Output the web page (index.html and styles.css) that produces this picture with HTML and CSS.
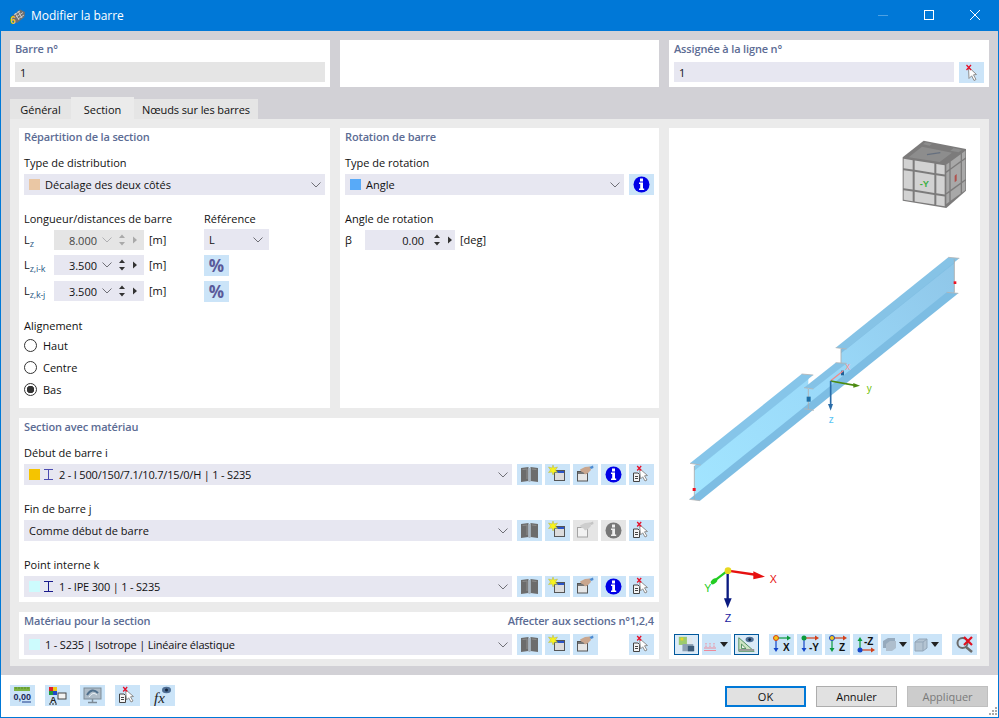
FILE: index.html
```html
<!DOCTYPE html>
<html>
<head>
	<title>Modifier la barre</title>
	<link rel="stylesheet" href="styles.css">
</head>
<body>

<svg class="defs">
	<symbol id="chev" viewBox="0 0 10 6"><path d="M.5 .5 5 5 9.500 .5" fill="none" stroke="#6f6f76"/></symbol>
	<symbol id="spin" viewBox="0 0 22 20"><path d="M4 4.500 7 8H1ZM1 12H7L4 15.500ZM15 6.500 19 10 15 13.500Z"/></symbol>
	<symbol id="info" viewBox="0 0 25 21">
		<circle cx="12.500" cy="10.500" r="8" fill="#0000e6"/>
		<rect x="11" y="4.500" width="3" height="3" fill="#fff"/>
		<path d="M10 8.500H14V14.500H15.200V16H10V14.500H11.200V10H10Z" fill="#fff"/>
	</symbol>
	<symbol id="info-off" viewBox="0 0 25 21">
		<circle cx="12.500" cy="10.500" r="8" fill="#777"/>
		<rect x="11" y="4.500" width="3" height="3" fill="#eee"/>
		<path d="M10 8.500H14V14.500H15.200V16H10V14.500H11.200V10H10Z" fill="#eee"/>
	</symbol>
	<symbol id="book" viewBox="0 0 25 21">
		<path d="M4 4 11.500 3V17L4 18ZM13.500 3 21 4V18L13.500 17Z" fill="#6c6c6c"/>
		<path d="M5.500 5.500 10 5V15M15 5 19.500 5.500" stroke="#8c8c8c" fill="none"/>
		<path d="M11.500 4H13.500V18H11.500Z" fill="#a9b4bf"/>
	</symbol>
	<symbol id="new" viewBox="0 0 25 21">
		<rect x="9.500" y="6.500" width="10" height="10" fill="#dcdcdc" stroke="#555"/>
		<rect x="10" y="7" width="9" height="2" fill="#2a55c8"/>
		<path d="M8 1 9 4 12.500 3 10.500 6 12.500 8.500 9.500 8 8 11 7 8 3.500 8.500 5.500 6 3.500 3 7 4Z" fill="#f6f21e" stroke="#b8b440" stroke-width=".5"/>
	</symbol>
	<symbol id="hand" viewBox="0 0 25 21">
		<rect x="4.500" y="7.500" width="10" height="9.500" fill="#e6e6e6" stroke="#555"/>
		<rect x="5" y="8" width="9" height="2" fill="#777"/>
		<path d="M7 5.500 12 3 17 2.500 18 6 15 9 12 10.500 10.500 8.500 8 7.500Z" fill="#c9a68e"/>
		<path d="M16.500 3 20 1.500 20.500 4 18 5Z" fill="#4f8bd0"/>
	</symbol>
	<symbol id="hand-off" viewBox="0 0 25 21">
		<rect x="4.500" y="7.500" width="10" height="9.500" fill="#f2f2f2" stroke="#a4a4a4"/>
		<path d="M7 5.500 12 3 17 2.500 18 6 15 9 12 10.500 10.500 8.500 8 7.500Z" fill="#cdcdcd"/>
		<path d="M16.500 3 20 1.500 20.500 4 18 5Z" fill="#c4c4c4"/>
	</symbol>
	<symbol id="pick" viewBox="0 0 25 21">
		<path d="M4.500 9H9L10.500 10.500V17.500H4.500Z" fill="#f4f4f4" stroke="#444"/>
		<path d="M6 12.500H9M6 14.500H9" stroke="#444"/>
		<path d="M10.500 4.500 18.500 11.500 15.500 11.800 18 16 16 17 13.700 12.800 11.500 15Z" fill="#fff" stroke="#8e8e8e"/>
		<path d="M8.200 2 12.200 6.500M12.200 2 8.200 6.500" stroke="#e6102a" stroke-width="1.300"/>
	</symbol>
	<symbol id="cursor" viewBox="0 0 25 21">
		<path d="M9.500 5 17.500 12.500 14.500 12.800 17 17.500 15 18.500 12.700 13.800 10 16.500Z" fill="#fff" stroke="#8e8e8e"/>
		<path d="M7.500 3 12 8M12 3 7.500 8" stroke="#e6102a" stroke-width="1.300"/>
	</symbol>
	<symbol id="ibeam" viewBox="0 0 9 11"><path d="M0 .5H9M0 10.500H9M4.500 .5V10.500" stroke="currentColor" fill="none"/></symbol>
	<symbol id="caret" viewBox="0 0 8 5"><path d="M0 0H8L4 5Z" fill="#222"/></symbol>
</svg>

<div class="window">
	<div class="titlebar">
		<svg class="app-icon" viewBox="0 0 16 16">
			<path d="M2 8 10 1.500 15 4 14.500 9 7 15 3 13Z" fill="#6f6f6f"/>
			<path d="M4 7 10 3M6 9 13 4.500M8 11 14 7M5 5 9 12M8 3 12 10" stroke="#dcdcdc" stroke-width=".8"/>
			<text x="0" y="15.500" class="app-six">6</text>
		</svg>
		<span class="title-text">Modifier la barre</span>
		<div class="winbtns">
			<svg class="winbtn" viewBox="0 0 46 31"><path d="M18 15.500H28" stroke="#4da1e3"/></svg>
			<svg class="winbtn" viewBox="0 0 46 31"><rect x="18.500" y="10.500" width="9" height="9" fill="none" stroke="#fff"/></svg>
			<svg class="winbtn" viewBox="0 0 46 31"><path d="M18 10 28 20M28 10 18 20" stroke="#fff"/></svg>
		</div>
	</div>

	<div class="main">
		<div class="top-row">
			<div class="panel">
				<div class="title">Barre n°</div>
				<div class="box box-off"><span>1</span></div>
			</div>
			<div class="panel"></div>
			<div class="panel">
				<div class="title">Assignée à la ligne n°</div>
				<div class="line">
					<div class="box grow"><span>1</span></div>
					<div class="btn"><svg><use href="#cursor"/></svg></div>
				</div>
			</div>
		</div>

		<div class="tabs">
			<div class="tab tab-a">Général</div>
			<div class="tab tab-on">Section</div>
			<div class="tab tab-c">Nœuds sur les barres</div>
		</div>

		<div class="tab-body">
			<div class="left-col">
				<div class="two-col">
					<div class="panel">
						<div class="title">Répartition de la section</div>
						<div class="label">Type de distribution</div>
						<div class="box"><i class="swatch sw-peach"></i><span class="grow">Décalage des deux côtés</span><svg class="chev"><use href="#chev"/></svg></div>

						<div class="dist-head">
							<div class="label">Longueur/distances de barre</div>
							<div class="label">Référence</div>
						</div>
						<div class="dist-row first">
							<span class="sym">L<sub>z</sub></span>
							<div class="num off"><span class="val">8.000</span><svg class="chev"><use href="#chev"/></svg><svg class="spin"><use href="#spin"/></svg></div>
							<span class="unit">[m]</span>
							<div class="box ref"><span class="grow">L</span><svg class="chev"><use href="#chev"/></svg></div>
						</div>
						<div class="dist-row">
							<span class="sym">L<sub>z,i-k</sub></span>
							<div class="num"><span class="val">3.500</span><svg class="chev"><use href="#chev"/></svg><svg class="spin"><use href="#spin"/></svg></div>
							<span class="unit">[m]</span>
							<div class="btn pct">%</div>
						</div>
						<div class="dist-row">
							<span class="sym">L<sub>z,k-j</sub></span>
							<div class="num"><span class="val">3.500</span><svg class="chev"><use href="#chev"/></svg><svg class="spin"><use href="#spin"/></svg></div>
							<span class="unit">[m]</span>
							<div class="btn pct">%</div>
						</div>

						<div class="label align-label">Alignement</div>
						<div class="radio"><i class="dot"></i>Haut</div>
						<div class="radio"><i class="dot"></i>Centre</div>
						<div class="radio"><i class="dot dot-on"></i>Bas</div>
					</div>

					<div class="panel">
						<div class="title">Rotation de barre</div>
						<div class="label">Type de rotation</div>
						<div class="line">
							<div class="box grow"><i class="swatch sw-blue"></i><span class="grow">Angle</span><svg class="chev"><use href="#chev"/></svg></div>
							<div class="btn"><svg><use href="#info"/></svg></div>
						</div>
						<div class="label label-gap">Angle de rotation</div>
						<div class="dist-row first">
							<span class="sym sym-short">β</span>
							<div class="num num-short"><span class="val">0.00</span><svg class="spin"><use href="#spin"/></svg></div>
							<span class="unit">[deg]</span>
						</div>
					</div>
				</div>

				<div class="panel section-panel">
					<div class="title">Section avec matériau</div>
					<div class="label">Début de barre i</div>
					<div class="line">
						<div class="box grow tight"><i class="swatch sw-gold"></i><svg class="ibeam beam-soft"><use href="#ibeam"/></svg><span class="grow">2 - I 500/150/7.1/10.7/15/0/H | 1 - S235</span><svg class="chev"><use href="#chev"/></svg></div>
						<div class="btn-group">
							<div class="btn"><svg><use href="#book"/></svg></div>
							<div class="btn"><svg><use href="#new"/></svg></div>
							<div class="btn"><svg><use href="#hand"/></svg></div>
							<div class="btn"><svg><use href="#info"/></svg></div>
							<div class="btn"><svg><use href="#pick"/></svg></div>
						</div>
					</div>
					<div class="label label-sect">Fin de barre j</div>
					<div class="line">
						<div class="box grow"><span class="grow">Comme début de barre</span><svg class="chev"><use href="#chev"/></svg></div>
						<div class="btn-group">
							<div class="btn"><svg><use href="#book"/></svg></div>
							<div class="btn"><svg><use href="#new"/></svg></div>
							<div class="btn btn-off"><svg><use href="#hand-off"/></svg></div>
							<div class="btn btn-off"><svg><use href="#info-off"/></svg></div>
							<div class="btn"><svg><use href="#pick"/></svg></div>
						</div>
					</div>
					<div class="label label-sect">Point interne k</div>
					<div class="line">
						<div class="box grow tight"><i class="swatch sw-ice"></i><svg class="ibeam"><use href="#ibeam"/></svg><span class="grow">1 - IPE 300 | 1 - S235</span><svg class="chev"><use href="#chev"/></svg></div>
						<div class="btn-group">
							<div class="btn"><svg><use href="#book"/></svg></div>
							<div class="btn"><svg><use href="#new"/></svg></div>
							<div class="btn"><svg><use href="#hand"/></svg></div>
							<div class="btn"><svg><use href="#info"/></svg></div>
							<div class="btn"><svg><use href="#pick"/></svg></div>
						</div>
					</div>
				</div>

				<div class="panel material-panel">
					<div class="title title-split"><span>Matériau pour la section</span><span>Affecter aux sections n°1,2,4</span></div>
					<div class="line">
						<div class="box grow tight"><i class="swatch sw-ice"></i><span class="grow">1 - S235 | Isotrope | Linéaire élastique</span><svg class="chev"><use href="#chev"/></svg></div>
						<div class="btn-group">
							<div class="btn"><svg><use href="#book"/></svg></div>
							<div class="btn"><svg><use href="#new"/></svg></div>
							<div class="btn"><svg><use href="#hand"/></svg></div>
							<div class="btn btn-blank"></div>
							<div class="btn"><svg><use href="#pick"/></svg></div>
						</div>
					</div>
				</div>
			</div>

			<div class="preview">
				<!-- cube -->
				<svg class="cube" viewBox="725 415 195 210">
					<path d="M727 470 790 420 917 445 917 570 858 622 727 600Z" fill="#7c7b7b"/>
					<g transform="matrix(1 .156 0 1 727 470)" fill="#d2d2d2">
						<rect x="3" y="4" width="27" height="28"/><rect x="36" y="4" width="59" height="28"/><rect x="101" y="4" width="25" height="28"/>
						<rect x="3" y="38" width="27" height="54"/><rect x="36" y="38" width="59" height="54"/><rect x="101" y="38" width="25" height="54"/>
						<rect x="3" y="98" width="27" height="29"/><rect x="36" y="98" width="59" height="29"/><rect x="101" y="98" width="25" height="29"/>
					</g>
					<g transform="matrix(1 -.726 0 1 855 490)" fill="#a8a8a8">
						<rect x="3" y="4" width="9" height="20"/><rect x="16" y="4" width="30" height="20"/><rect x="50" y="4" width="10" height="20"/>
						<rect x="3" y="29" width="9" height="60"/><rect x="16" y="29" width="30" height="60"/><rect x="50" y="29" width="10" height="60"/>
						<rect x="3" y="94" width="9" height="28"/><rect x="16" y="94" width="30" height="28"/><rect x="50" y="94" width="10" height="28"/>
					</g>
					<path d="M745 470 785 438 875 456 838 484ZM795 425 815 429 808 435 788 431ZM880 442 905 447 895 455 870 450Z" fill="#8d8d8d"/>
					<path d="M800 462 840 456" stroke="#66707f" stroke-width="4"/>
					<path d="M883 525 889 520V540L883 545Z" fill="#b0504c"/>
					<text x="778" y="558" class="cube-y">-Y</text>
				</svg>

				<!-- beam -->
				<svg class="beam" viewBox="0 0 987 810">
					<defs>
						<linearGradient id="webfill" gradientUnits="userSpaceOnUse" x1="70" y1="760" x2="860" y2="60">
							<stop offset="0" stop-color="#a2e5ff"/>
							<stop offset=".5" stop-color="#9ad9f9"/>
							<stop offset="1" stop-color="#8fc6e8"/>
						</linearGradient>
					</defs>
					<path d="M513 327 853 58V158L513 425Z" fill="url(#webfill)"/>
					<path d="M415 447 515 372V430L415 510Z" fill="url(#webfill)"/>
					<path d="M73 678 415 405V508L73 778Z" fill="url(#webfill)"/>
					<path d="M513 327 853 58 853 70 513 340Z" fill="#80bfe4"/>
					<path d="M73 678 415 405 415 418 73 692Z" fill="#8ccdee"/>
					<path d="M497 323 835 52 868 55 530 327Z" fill="#86c3e6"/>
					<path d="M60 670 395 402 430 405 92 675Z" fill="#86c5e9"/>
					<path d="M402 443 497 368 530 370 430 447Z" fill="#84c2e6"/>
					<path d="M830 157 865 160 90 782 58 778Z" fill="#7dbde3"/>
					<path d="M73 678V778M853 58V158M513 327V370M415 447V508" stroke="#a9a9a9" stroke-width="2.500" fill="none"/>
					<path d="M60 670 92 675M835 52 868 55M497 323 530 327M395 402 430 405M402 443 430 447M497 368 530 370M402 506 432 511M830 157 865 160M58 778 90 782" stroke="#b4b4b4" stroke-width="2.500"/>
					<rect x="68" y="744" width="9" height="9" fill="#ee1122"/>
					<rect x="851" y="124" width="8" height="8" fill="#ee1122"/>
					<rect x="410" y="470" width="12" height="15" fill="#1f6fa6"/>
					<rect x="513" y="392" width="9" height="14" fill="#1f5f96"/>
					<path d="M482 422 520 392" stroke="#f08a8a" stroke-width="4"/>
					<path d="M482 423 555 436" stroke="#4c8a10" stroke-width="5"/><path d="M550 429 570 437 550 443Z" fill="#4c8a10"/>
					<path d="M482 423V495" stroke="#2a6ca8" stroke-width="5"/><path d="M474 492H489L482 512Z" fill="#2a6ca8"/>
					<text x="526" y="390" class="tri-lbl tri-x">x</text>
					<text x="590" y="456" class="tri-lbl tri-y">y</text>
					<text x="476" y="550" class="tri-lbl tri-z">z</text>
				</svg>

				<!-- triad -->
				<svg class="triad" viewBox="0 0 987 252">
					<path d="M173 62 262 75" stroke="#e61010" stroke-width="7"/><path d="M250 64 285 80 250 88Z" fill="#e61010"/>
					<path d="M173 62 130 95" stroke="#22cc22" stroke-width="7"/><ellipse cx="132" cy="94" rx="11" ry="7" transform="rotate(-40 132 94)" fill="#22cc22"/>
					<path d="M173 62V150" stroke="#0a1a80" stroke-width="7"/><path d="M162 145H185L173 174Z" fill="#0a1a80"/>
					<circle cx="174" cy="62" r="10" fill="#e8d820"/>
					<text x="299" y="98" class="tri-big tb-x">X</text>
					<text x="103" y="125" class="tri-big tb-y">Y</text>
					<text x="164" y="215" class="tri-big tb-z">Z</text>
				</svg>

				<div class="view-bar">
					<div class="btn btn-sel">
						<svg viewBox="0 0 25 21"><rect x="4" y="2" width="9" height="9" fill="#9ccb6e"/><rect x="6" y="3" width="3" height="3" fill="#e8d820"/><rect x="8" y="10" width="12" height="8" fill="#8ca0b4"/><rect x="13" y="3" width="6" height="7" fill="#dfe7ec"/><rect x="14" y="12" width="7" height="6" fill="#3c5a78"/></svg>
					</div>
					<div class="btn btn-drop">
						<svg class="drop-ic" viewBox="0 0 14 21"><path d="M1 14H13M1 16.500H13" stroke="#ee8a9a"/><path d="M3 9V13M7 9V13M11 9V13" stroke="#ee8a9a" stroke-dasharray="1.500 1"/></svg>
						<svg class="caret"><use href="#caret"/></svg>
					</div>
					<div class="btn btn-sel">
						<svg viewBox="0 0 25 21"><path d="M4 3V18H21Z" fill="#cfe5c4" stroke="#4a8a5a"/><path d="M7 10V15H12Z" fill="#f0f6ee" stroke="#4a8a5a"/><path d="M4 16.500H21" stroke="#999" stroke-width="2"/><ellipse cx="16" cy="5" rx="4.500" ry="3" fill="#4f6f95"/><circle cx="16" cy="5" r="1.500" fill="#12243c"/></svg>
					</div>
					<div class="btn bar-gap">
						<svg viewBox="0 0 25 21">
							<path d="M7 4H19" stroke="#0a9a3c" stroke-width="1.200"/><path d="M18 1.500 22 4 18 6.500Z" fill="#0a9a3c"/>
							<path d="M7 5V15" stroke="#1446c8" stroke-width="1.200"/><path d="M4.500 14 7 18 9.500 14Z" fill="#1446c8"/>
							<circle cx="7" cy="4" r="2.500" fill="#f5c518" stroke="#d2401a"/>
							<text x="14" y="17" class="axis-text">X</text>
						</svg>
					</div>
					<div class="btn">
						<svg viewBox="0 0 25 21">
							<path d="M7 4H19" stroke="#d2401a" stroke-width="1.200"/><path d="M18 1.500 22 4 18 6.500Z" fill="#d2401a"/>
							<path d="M7 5V15" stroke="#1446c8" stroke-width="1.200"/><path d="M4.500 14 7 18 9.500 14Z" fill="#1446c8"/>
							<circle cx="7" cy="4" r="2.500" fill="#0a9a3c"/>
							<text x="12" y="17" class="axis-text">-Y</text>
						</svg>
					</div>
					<div class="btn">
						<svg viewBox="0 0 25 21">
							<path d="M7 4H19" stroke="#d2401a" stroke-width="1.200"/><path d="M18 1.500 22 4 18 6.500Z" fill="#d2401a"/>
							<path d="M7 5V15" stroke="#0a9a3c" stroke-width="1.200"/><path d="M4.500 14 7 18 9.500 14Z" fill="#0a9a3c"/>
							<circle cx="7" cy="4" r="2.500" fill="#f5c518" stroke="#1446c8"/>
							<text x="14" y="17" class="axis-text">Z</text>
						</svg>
					</div>
					<div class="btn">
						<svg viewBox="0 0 25 21">
							<path d="M7 16H19" stroke="#d2401a" stroke-width="1.200"/><path d="M18 13.500 22 16 18 18.500Z" fill="#d2401a"/>
							<path d="M7 15V6" stroke="#0a9a3c" stroke-width="1.200"/><path d="M4.500 7 7 3 9.500 7Z" fill="#0a9a3c"/>
							<circle cx="7" cy="16" r="2.500" fill="#1446c8"/>
							<text x="11" y="11" class="axis-text">-Z</text>
						</svg>
					</div>
					<div class="btn btn-drop">
						<svg class="drop-ic" viewBox="0 0 14 21"><path d="M1 7 6 4H13V11L8 14H1Z" fill="#96aabd"/><path d="M4 10 8 7H14V14L10 17H4Z" fill="#aebecd"/></svg>
						<svg class="caret"><use href="#caret"/></svg>
					</div>
					<div class="btn btn-drop">
						<svg class="drop-ic" viewBox="0 0 14 21"><path d="M1 8 5 5H13V14L9 17H1Z" fill="#b4c4d2" stroke="#93a6b8"/><path d="M1 8H9V17M9 8 13 5" fill="none" stroke="#93a6b8"/></svg>
						<svg class="caret"><use href="#caret"/></svg>
					</div>
					<div class="btn bar-gap">
						<svg viewBox="0 0 25 21"><circle cx="10.500" cy="9" r="5" fill="none" stroke="#6b6b6b" stroke-width="2"/><path d="M14 13 20 18" stroke="#6b6b6b" stroke-width="2.500"/><path d="M12 3 20 11M20 3 12 11" stroke="#e01020" stroke-width="2.200"/></svg>
					</div>
				</div>
			</div>
		</div>
	</div>

	<div class="footer">
		<div class="foot-icons">
			<div class="btn">
				<svg viewBox="0 0 25 21"><rect x="4" y="2" width="16" height="4" fill="#7cb342"/><path d="M6 2V4M9 2V4M12 2V4M15 2V4M18 2V4" stroke="#4c7a1c" stroke-width=".7"/><text x="3.500" y="15" class="zero-text">0,00</text><path d="M12 17H21" stroke="#1b3a8a"/></svg>
			</div>
			<div class="btn">
				<svg viewBox="0 0 25 21"><rect x="4" y="2" width="4" height="4" fill="#e01f26"/><rect x="8" y="2" width="4" height="4" fill="#f0c814"/><rect x="4" y="6" width="4" height="4" fill="#1f9a3c"/><rect x="8" y="6" width="4" height="4" fill="#1f4ac8"/><text x="5" y="18" class="a-text">A</text><rect x="13" y="8" width="8" height="6" fill="#f2f2f2" stroke="#444"/><path d="M4 19H13" stroke="#222" stroke-dasharray="2 1"/></svg>
			</div>
			<div class="btn">
				<svg viewBox="0 0 25 21"><rect x="4" y="3" width="17" height="11" fill="#aebcc8" stroke="#7d8b97"/><path d="M7 10Q12 2 18 8" fill="none" stroke="#4f6f8c" stroke-width="2"/><path d="M9 12Q13 6 17 10" fill="none" stroke="#e6eef4"/><path d="M12.500 14V17M8 17.500H17" stroke="#7d8b97" stroke-width="1.500"/></svg>
			</div>
			<div class="btn"><svg><use href="#pick"/></svg></div>
			<div class="btn">
				<svg viewBox="0 0 25 21"><text x="4" y="18" class="fx-text">fx</text><ellipse cx="16.500" cy="5" rx="4.500" ry="3.200" fill="#4f6f95"/><circle cx="16.500" cy="5" r="1.500" fill="#12243c"/></svg>
			</div>
		</div>
		<div class="foot-btns">
			<div class="push push-def">OK</div>
			<div class="push">Annuler</div>
			<div class="push push-off">Appliquer</div>
		</div>
		<svg class="grip" viewBox="0 0 11 11"><path d="M8 1h2v2H8zM5 4h2v2H5zM8 4h2v2H8zM2 7h2v2H2zM5 7h2v2H5zM8 7h2v2H8z" fill="#a9a9a9"/></svg>
	</div>
</div>

</body>
</html>
```

FILE: styles.css
```css
* { box-sizing: border-box; }

body {
	margin: 0;
	font-family: "Open Sans", "Noto Sans", sans-serif;
	font-size: 11px;
	color: #111;
	background: #fff;
	overflow: hidden;
}

.defs { position: absolute; width: 0; height: 0; }

.window {
	width: 999px;
	height: 718px;
	border: 1px solid #0078d7;
	border-top: 0;
	display: flex;
	flex-direction: column;
	position: relative;
}

.titlebar {
	height: 31px;
	background: #0078d7;
	color: #fff;
	display: flex;
	align-items: center;
	padding-left: 9px;
	font-size: 12px;
}
.app-icon { width: 16px; height: 16px; margin-right: 5px; }
.app-six { font: bold 10px "Liberation Sans", sans-serif; fill: #f5c518; }
.title-text { flex: 1; letter-spacing: -.05px; }
.winbtns { display: flex; }
.winbtn { width: 46px; height: 31px; display: block; }

.main {
	height: 644px;
	background: #d2d1d6;
	padding: 9px 9px 0 9px;
}

.top-row {
	display: grid;
	grid-template-columns: 320px 319px 320px;
	gap: 10px;
	height: 47px;
}

.panel { background: #fff; padding: 0 5px; }

.title {
	height: 18px;
	line-height: 18px;
	font-weight: 600;
	color: #5c6c94;
	letter-spacing: -.15px;
}
.title-split { display: flex; justify-content: space-between; }

.top-row .title { height: 22px; }

.label {
	height: 16px;
	line-height: 16px;
	margin-top: 10px;
	margin-bottom: 2px;
}
.title + .label { margin-top: 9px; margin-bottom: 3px; }
.label-gap { margin-top: 16px; margin-bottom: 2px; }
.label-sect { margin-top: 16px; margin-bottom: 3px; }

.line { display: flex; gap: 5px; }
.grow { flex: 1; }

.box {
	height: 21px;
	background: #e7e7f1;
	display: flex;
	align-items: center;
	padding-left: 5px;
	white-space: nowrap;
}
.tight { letter-spacing: -.19px; }
.top-row .box { height: 20px; }
.box-off { background: #e5e5e5; }

.swatch { width: 11px; height: 11px; margin-right: 5px; display: block; }
.sw-peach { background: #eac7a4; }
.sw-blue { background: #58aaf8; }
.sw-gold { background: #f5c400; }
.sw-ice { background: #cdfbfd; }

.ibeam { width: 9px; height: 11px; margin-right: 6px; margin-left: -1px; color: #1a1a8c; }
.beam-soft { color: #4a4ab0; }

.chev { width: 10px; height: 6px; margin: 0 4px; flex: none; }
.box > .chev { margin: 0 4px 0 0; }

.btn {
	width: 25px;
	height: 21px;
	background: #cbe4f8;
	flex: none;
	display: block;
}
.btn svg { width: 25px; height: 21px; display: block; }
.btn-off { background: #e5e5e5; }
.btn-blank { background: none; }

.btn-group { display: flex; gap: 3px; }

.pct {
	font: bold 17px "Open Sans", sans-serif;
	color: #5a5a9a;
	text-align: center;
	line-height: 21px;
}

.dist-head {
	display: flex;
	margin-top: 16px;
}
.dist-head .label { margin-top: 0; width: 180px; flex: none; }

.dist-row {
	display: flex;
	align-items: flex-start;
	height: 21px;
	margin-bottom: 5px;
}
.first { align-items: flex-end; }

.sym { width: 30px; line-height: 20px; flex: none; }
.sym-short { width: 20px; }
.sym sub { font-size: 9px; color: #2c5a86; line-height: 0; letter-spacing: -.2px; }

.num {
	width: 90px;
	height: 20px;
	background: #e7e7f1;
	display: flex;
	align-items: center;
	flex: none;
}
.num .val { width: 43px; text-align: right; flex: none; }
.num .chev { margin: 0 0 0 5px; }
.spin { width: 22px; height: 20px; margin-left: 6px; fill: #333; flex: none; }
.off { background: #e5e5e5; }
.off .val { color: #444; }
.off .spin { fill: #a9a9a9; }
.off .chev { opacity: .45; }

.num-short .val { width: 59px; }
.num-short .spin { margin-left: 9px; }

.unit { margin-left: 5px; line-height: 20px; width: 55px; flex: none; }

.ref { width: 65px; height: 21px; }
.ref .chev { margin-right: 6px; }

.align-label { margin-top: 16px; margin-bottom: 0; }

.radio {
	height: 22px;
	display: flex;
	align-items: center;
	gap: 6px;
}
.dot {
	width: 13px;
	height: 13px;
	border: 1px solid #333;
	border-radius: 50%;
	background: #fff;
	display: block;
}
.dot-on { background: radial-gradient(circle, #333 0 3.500px, #fff 4px); }

.tabs {
	display: flex;
	align-items: flex-end;
	height: 22px;
	margin-top: 10px;
}
.tab {
	height: 20px;
	line-height: 21px;
	text-align: center;
	background: #e5e5e5;
	white-space: nowrap;
}
.tab-a { width: 61px; }
.tab-c { width: 124px; letter-spacing: -.1px; }
.tab-on { width: 63px; height: 22px; line-height: 25px; background: #ebebeb; }

.tab-body {
	width: 979px;
	height: 547px;
	background: #ebebeb;
	padding: 9px 9px 7px 9px;
	display: flex;
	gap: 10px;
}

.left-col {
	width: 640px;
	display: flex;
	flex-direction: column;
	gap: 10px;
}
.two-col {
	display: grid;
	grid-template-columns: 311px 319px;
	gap: 10px;
	height: 280px;
	flex: none;
}
.section-panel { height: 184px; flex: none; }
.material-panel { height: 47px; flex: none; }
.material-panel .title { margin-bottom: 4px; }

.preview {
	width: 311px;
	height: 531px;
	background: #fff;
	position: relative;
	display: flex;
	align-items: flex-end;
	padding: 0 5px 4px 5px;
}

.cube { position: absolute; right: 13px; top: 11px; width: 65px; height: 70px; }
.cube-y { font: bold 28px "Liberation Sans", sans-serif; fill: #3cb043; }
.beam { position: absolute; left: 1px; top: 112px; width: 329px; height: 270px; }
.tri-lbl { font: 30px "Liberation Sans", sans-serif; }
.tri-x { fill: #f49a9a; }
.tri-y { fill: #6fc20a; }
.tri-z { fill: #58c4f4; }
.triad { position: absolute; left: 1px; top: 422px; width: 329px; height: 84px; }
.tri-big { font: 32px "Liberation Sans", sans-serif; }
.tb-x { fill: #e61010; }
.tb-y { fill: #22cc22; }
.tb-z { fill: #1a1aa0; }

.view-bar { display: flex; gap: 3px; position: relative; }
.bar-gap { margin-left: 7px; }
.btn-sel { border: 1px solid #00589c; background: #dbeaf7; }
.btn-sel svg { width: 23px; height: 19px; }
.btn-drop { width: 29px; display: flex; align-items: center; padding-left: 1px; }
.btn-drop svg.drop-ic { width: 14px; height: 21px; flex: none; }
.btn-drop svg.caret { width: 8px; height: 5px; margin-left: 3px; flex: none; }

.axis-text { font: bold 10px "Liberation Sans", sans-serif; fill: #111; }
.zero-text { font: bold 9px "Liberation Sans", sans-serif; fill: #1b2a5a; }
.a-text { font: bold 9px "Liberation Sans", sans-serif; fill: #222; }
.fx-text { font: italic 15px "Liberation Serif", serif; fill: #222; }

.footer {
	flex: 1;
	display: flex;
	justify-content: space-between;
	padding: 10px 10px 0 9px;
	position: relative;
}
.foot-icons { display: flex; gap: 10px; }
.foot-btns { display: flex; gap: 10px; padding-top: 1px; }

.push {
	width: 81px;
	height: 21px;
	background: #e1e1e1;
	border: 1px solid #adadad;
	text-align: center;
	line-height: 19px;
}
.push-def { border: 2px solid #0078d7; line-height: 17px; }
.push-off { background: #cccccc; color: #7a7a7a; border-color: #bfbfbf; }

.grip { position: absolute; right: 0; bottom: 0; width: 11px; height: 11px; }
```
